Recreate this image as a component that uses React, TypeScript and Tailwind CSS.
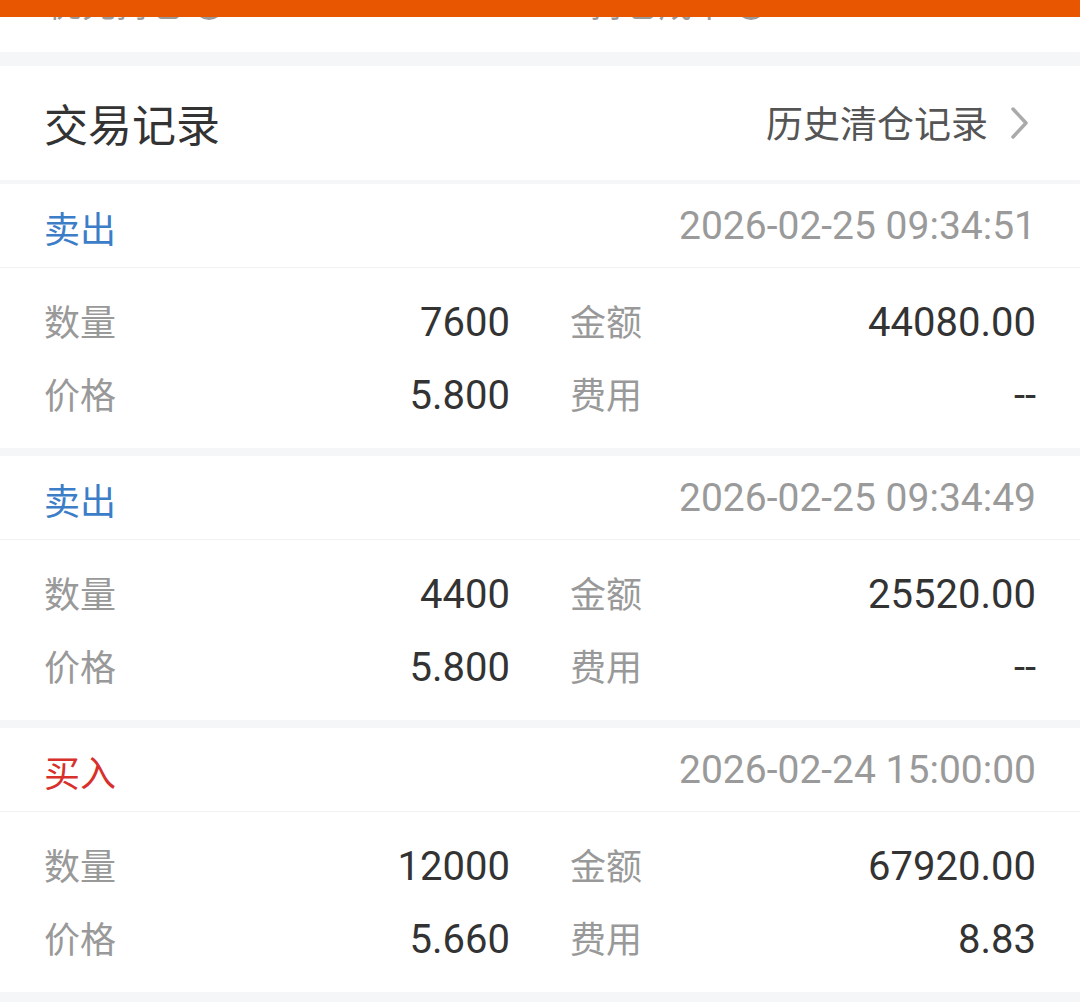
import * as React from "react";

const sans = "font-['Roboto','Noto_Sans_CJK_SC',sans-serif]";

type Trade = {
  side: "卖出" | "买入";
  time: string;
  qty: string;
  amount: string;
  price: string;
  fee: string;
};

const trades: Trade[] = [
  { side: "卖出", time: "2026-02-25 09:34:51", qty: "7600", amount: "44080.00", price: "5.800", fee: "--" },
  { side: "卖出", time: "2026-02-25 09:34:49", qty: "4400", amount: "25520.00", price: "5.800", fee: "--" },
  { side: "买入", time: "2026-02-24 15:00:00", qty: "12000", amount: "67920.00", price: "5.660", fee: "8.83" },
];

function Cell({ label, value }: { label: string; value: string }) {
  return (
    <div className="flex h-[73px] items-baseline justify-between pt-[12px]">
      <span className="font-['Noto_Sans_CJK_SC',sans-serif] text-[36px] leading-[48px] text-[#999]">{label}</span>
      <span className="font-['Roboto',sans-serif] text-[40px] leading-[48px] text-[#333]">{value}</span>
    </div>
  );
}

function TradeCard({ trade }: { trade: Trade }) {
  const sideColor = trade.side === "买入" ? "text-[#d8302b]" : "text-[#3c7dc8]";
  return (
    <div className="bg-white">
      <div className="flex h-[84px] items-center justify-between border-b border-[#f1f1f1] px-[44px] pt-[2px]">
        <span className={`font-['Noto_Sans_CJK_SC',sans-serif] text-[36px] ${sideColor}`}>{trade.side}</span>
        <span className="font-['Roboto',sans-serif] text-[39px] text-[#9a9a9a]">{trade.time}</span>
      </div>
      <div className="grid grid-cols-2 gap-x-[60px] px-[44px] pb-[18px] pt-[16px]">
        <Cell label="数量" value={trade.qty} />
        <Cell label="金额" value={trade.amount} />
        <Cell label="价格" value={trade.price} />
        <Cell label="费用" value={trade.fee} />
      </div>
    </div>
  );
}

export default function App() {
  return (
    <div className={`w-[1080px] h-[1002px] overflow-hidden bg-[#f5f6f8] ${sans}`}>
      <div className="h-[17px] bg-[#e85602]" />
      <div className="h-[35px] overflow-hidden bg-white">
        <div className="-mt-[33px] flex items-center px-[48px] text-[34px] leading-[42px] text-[#999]">
          <span>优先持仓</span>
          <span className="ml-[10px] inline-block h-[30px] w-[30px] rounded-full border-[3px] border-[#999]" />
          <span className="ml-[170px] text-[#333]">0.00</span>
          <span className="ml-[130px]">持仓成本</span>
          <span className="ml-[10px] inline-block h-[30px] w-[30px] rounded-full border-[3px] border-[#999]" />
          <span className="ml-[130px] text-[#333]">5.660</span>
        </div>
      </div>
      <div className="h-[14px]" />
      <div className="flex h-[114px] items-center justify-between bg-white px-[44px]">
        <span className="font-['Noto_Sans_CJK_SC',sans-serif] text-[44px] text-[#333]">交易记录</span>
        <div className="flex items-center gap-[22px]">
          <span className="font-['Noto_Sans_CJK_SC',sans-serif] text-[37px] text-[#555]">历史清仓记录</span>
          <svg width="20" height="34" viewBox="0 0 20 34" fill="none" className="mr-[6px]">
            <path d="M3 3 L16 17 L3 31" stroke="#aaa" strokeWidth="3.5" strokeLinecap="round" strokeLinejoin="round" />
          </svg>
        </div>
      </div>
      <div className="mt-[4px] flex flex-col gap-[8px]">
        {trades.map((t, i) => (
          <TradeCard key={i} trade={t} />
        ))}
      </div>
    </div>
  );
}
